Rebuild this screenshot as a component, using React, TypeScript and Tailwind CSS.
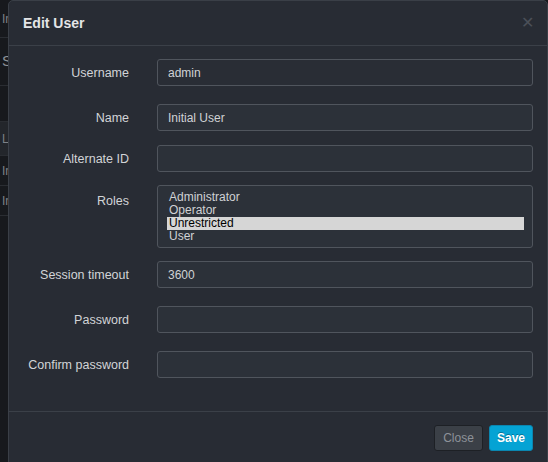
import React from "react";

const font = { fontFamily: '"Liberation Sans", Arial, Helvetica, sans-serif' };

function Row({ label, children, className = "", top = false }: { label: string; children: React.ReactNode; className?: string; top?: boolean }) {
  return (
    <div className={`flex ${top ? "items-start" : "items-center"} ${className}`}>
      <div className={`w-[120px] shrink-0 text-right text-[12.5px] text-[#d2d4d7] ${top ? "pt-[7px]" : "pt-[2px]"}`}>{label}</div>
      <div className="ml-[28px] flex-1">{children}</div>
    </div>
  );
}

function Input({ value = "", lighter = true }: { value?: string; lighter?: boolean }) {
  return (
    <div
      className={`h-[27px] rounded-[3px] border border-[#50555d] ${lighter ? "bg-[#2c3139]" : "bg-[#292d35]"} px-[10px] flex items-center text-[12px] text-[#d0d2d5]`}
    >
      {value}
    </div>
  );
}

export default function App() {
  return (
    <div className="relative w-[548px] h-[462px] overflow-hidden bg-[#17191d]" style={font}>
      {/* background page */}
      <div className="flex flex-col text-[12px] text-[#7d8187]">
        <div className="h-[38px] border-b border-[#2a2d32] flex items-center pl-[2px]">In</div>
        <div className="h-[48px] border-b border-[#2a2d32] flex items-center pl-[2px] text-[15px] text-[#8e9297]">S</div>
        <div className="h-[36px] border-b border-[#2a2d32]"></div>
        <div className="h-[34px] bg-[#23262b] border-b border-[#2a2d32] flex items-center pl-[2px]">Lo</div>
        <div className="h-[30px] border-b border-[#2a2d32] flex items-center pl-[2px]">In</div>
        <div className="h-[30px] border-b border-[#2a2d32] flex items-center pl-[2px]">In</div>
      </div>

      {/* modal */}
      <div className="absolute left-[8px] top-0 w-[540px] h-[480px] rounded-[5px] border border-[#3a3f47] bg-[#282c34] flex flex-col">
        <div className="h-[45px] border-b border-[#3b4048] flex items-center justify-between pl-[14px] pr-[13px]">
          <span className="text-[14px] font-bold text-[#e4e5e7]">Edit User</span>
          <span className="text-[16px] leading-none text-[#4b5058]">✕</span>
        </div>
        <div className="pt-[13px] pr-[14px] flex flex-col">
          <Row label="Username"><Input value="admin" lighter={false} /></Row>
          <Row label="Name" className="mt-[18px]"><Input value="Initial User" /></Row>
          <Row label="Alternate ID" className="mt-[14px]"><Input /></Row>
          <Row label="Roles" className="mt-[13px]" top>
            <div className="h-[63px] rounded-[3px] border border-[#50555d] bg-[#2c3139] pl-[9px] pr-[8px] pt-[5px] text-[12px] leading-[13px] text-[#d0d2d5]">
              <div className="pl-[2px]">Administrator</div>
              <div className="pl-[2px]">Operator</div>
              <div className="pl-[2px] bg-[#d6d6d6] text-black">Unrestricted</div>
              <div className="pl-[2px]">User</div>
            </div>
          </Row>
          <Row label="Session timeout" className="mt-[13px]"><Input value="3600" /></Row>
          <Row label="Password" className="mt-[18px]"><Input /></Row>
          <Row label="Confirm password" className="mt-[18px]"><Input /></Row>
        </div>
        <div className="mt-[33px] border-t border-[#3b4048] pt-[13px] pr-[14px] flex justify-end gap-[6px]">
          <button className="h-[26px] w-[49px] rounded-[3px] border border-[#1d2025] bg-[#3b4047] text-[12px] text-[#8d9299]">Close</button>
          <button className="h-[26px] w-[44px] rounded-[3px] border border-[#0a86b0] bg-[#05a3d4] text-[12px] font-bold text-white [text-shadow:0_-1px_0_rgba(0,0,0,0.3)]">Save</button>
        </div>
      </div>
    </div>
  );
}
